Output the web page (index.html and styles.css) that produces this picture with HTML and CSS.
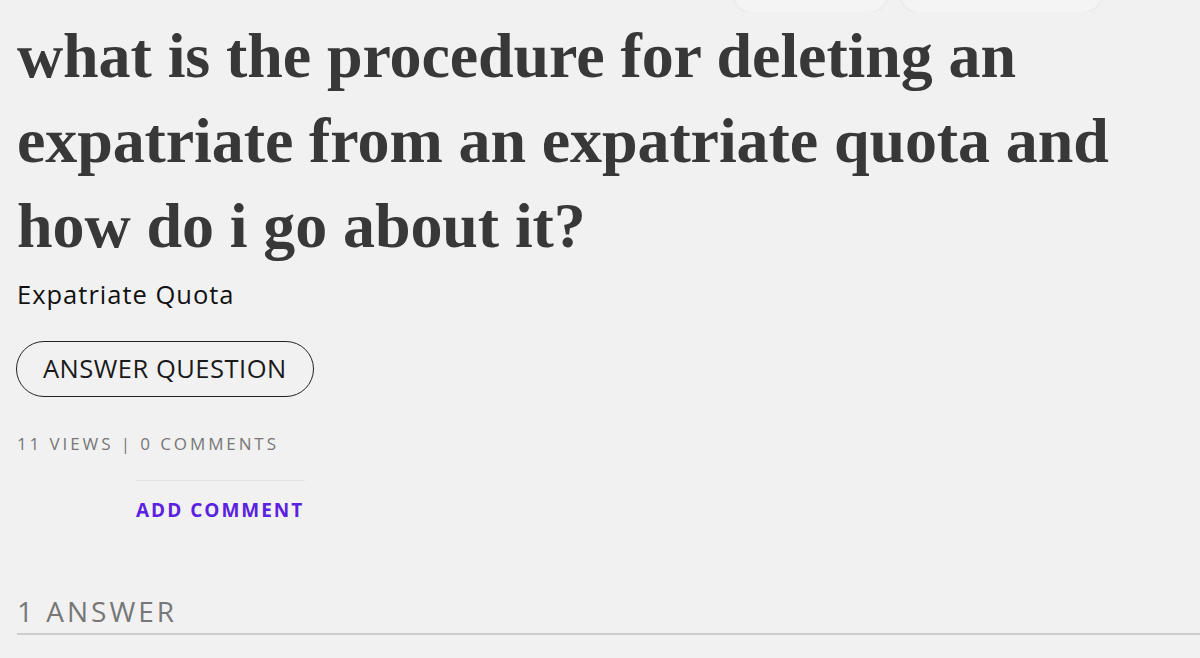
FILE: index.html
```html
<!DOCTYPE html>
<html lang="en">
<head>
<meta charset="utf-8">
<title>Question</title>
<link rel="stylesheet" href="styles.css">
</head>
<body>
<div class="topbar">
  <div class="pill pill-a"></div>
  <div class="pill pill-b"></div>
</div>
<main class="question">
  <h1 class="title">what is the procedure for deleting an expatriate from an expatriate quota and how do i go about it?</h1>
  <div class="tag">Expatriate Quota</div>
  <a class="answer-btn" href="#">ANSWER QUESTION</a>
  <div class="stats">11 VIEWS | 0 COMMENTS</div>
  <div class="comment-area">
    <a class="add-comment" href="#">ADD COMMENT</a>
  </div>
  <div class="answers-head">1 ANSWER</div>
</main>
</body>
</html>
```
FILE: styles.css
```css
html, body {
  margin: 0;
  padding: 0;
  background: #f1f1f1;
  overflow: hidden;
}
.topbar {
  display: flex;
  justify-content: flex-end;
  gap: 12px;
  padding-right: 98px;
  height: 12px;
  overflow: hidden;
}
.pill {
  height: 40px;
  margin-top: -28px;
  border-radius: 20px;
  background: #f4f4f4;
  box-shadow: 0 1px 3px rgba(0,0,0,0.05);
}
.pill-a { width: 155px; }
.pill-b { width: 202px; }
.question {
  padding: 0 0 0 17px;
  font-family: "Open Sans", "Liberation Sans", sans-serif;
}
.title {
  margin: 1px 0 0 0;
  font-family: "Liberation Serif", serif;
  font-weight: 700;
  font-size: 64px;
  line-height: 85px;
  color: #383838;
  letter-spacing: -0.1px;
  max-width: 1120px;
}
.tag {
  margin-top: 11px;
  font-size: 25.5px;
  line-height: 30px;
  letter-spacing: 1px;
  color: #111;
}
.answer-btn {
  display: inline-block;
  box-sizing: border-box;
  margin: 32px 0 0 -1px;
  height: 56px;
  line-height: 53px;
  padding: 0 26px;
  border: 1.5px solid #222;
  border-radius: 28px;
  font-size: 25.5px;
  letter-spacing: 0.5px;
  color: #1a1a1a;
  text-decoration: none;
}
.stats {
  margin-top: 37px;
  font-size: 17px;
  line-height: 20px;
  letter-spacing: 2.9px;
  color: #777;
}
.comment-area {
  margin: 26px 0 0 119px;
  width: 169px;
  border-top: 1px solid #e2e2e2;
  padding-top: 18px;
}
.add-comment {
  display: block;
  font-size: 19px;
  font-weight: 700;
  letter-spacing: 2px;
  color: #5a22e0;
  text-decoration: none;
  line-height: 22px;
}
.answers-head {
  margin-top: 74px;
  font-size: 28px;
  line-height: 32px;
  letter-spacing: 3px;
  color: #777;
  padding-bottom: 6px;
  border-bottom: 2px solid #cdcdcd;
}
```
